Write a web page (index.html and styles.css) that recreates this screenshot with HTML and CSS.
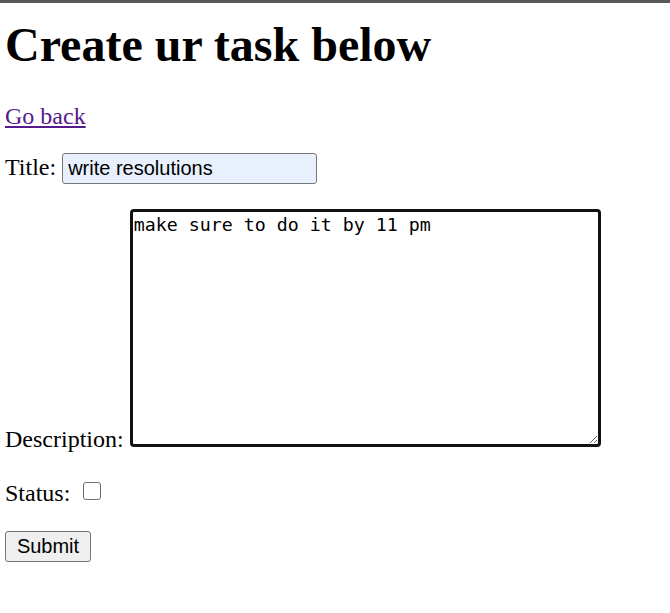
FILE: index.html
```html
<!DOCTYPE html>
<html lang="en">
<head>
<meta charset="utf-8">
<title>Create task</title>
<link rel="stylesheet" href="styles.css">
</head>
<body>
<div class="topbar"></div>
<main class="page">
  <h1 class="heading">Create ur task below</h1>
  <p class="row row-back"><a class="back-link" href="#">Go back</a></p>
  <form class="task-form">
    <p class="row row-title"><label for="title">Title:</label> <input class="title-input" id="title" type="text" value="write resolutions"></p>
    <p class="row row-desc"><label for="desc">Description:</label> <textarea class="desc-input" id="desc">make sure to do it by 11 pm</textarea></p>
    <p class="row row-status"><label for="status">Status:</label> <input class="status-check" id="status" type="checkbox"></p>
    <div class="actions"><button class="submit-btn" type="submit">Submit</button></div>
  </form>
</main>
</body>
</html>
```

FILE: styles.css
```css
html, body {
  margin: 0;
  padding: 0;
  background: #ffffff;
}

body {
  font-family: "Liberation Serif", "Times New Roman", serif;
  font-size: 24px;
  color: #000000;
}

.topbar {
  height: 3px;
  background: #58585b;
}

.page {
  padding-left: 5px;
}

.heading {
  font-size: 48px;
  font-weight: bold;
  margin: 14px 0 31px;
}

.row {
  margin: 0 0 24px;
}

.row-back {
  margin-bottom: 23px;
}

.back-link {
  color: #551a8b;
  text-decoration: underline;
}

.title-input {
  box-sizing: border-box;
  width: 255px;
  height: 31px;
  margin: 0;
  padding: 0 5px;
  border: 1px solid #767676;
  border-radius: 3px;
  background: #e8f0fe;
  font-family: "Liberation Sans", Arial, sans-serif;
  font-size: 20px;
  color: #000000;
}

.desc-input {
  box-sizing: border-box;
  width: 471px;
  height: 238px;
  margin: 0;
  padding: 2px 1px;
  border: 3px solid #111111;
  border-radius: 4px;
  outline: none;
  font-family: "DejaVu Sans Mono", "Liberation Mono", monospace;
  font-size: 18.3px;
  color: #000000;
  background: #ffffff;
}

.row-desc {
  margin-top: 25px;
}

.row-status {
  margin-top: 27px;
}

.status-check {
  appearance: none;
  -webkit-appearance: none;
  box-sizing: border-box;
  width: 18px;
  height: 18px;
  margin: 0 0 1px 7px;
  border: 1.5px solid #6f6f6f;
  border-radius: 3px;
  background: #ffffff;
  vertical-align: baseline;
}

.actions {
  margin-top: 1px;
}

.submit-btn {
  display: block;
  box-sizing: border-box;
  width: 86px;
  height: 31px;
  margin: 0;
  padding: 0;
  border: 1px solid #767676;
  border-radius: 3px;
  background: #efefef;
  font-family: "Liberation Sans", Arial, sans-serif;
  font-size: 20px;
  color: #000000;
}
```
